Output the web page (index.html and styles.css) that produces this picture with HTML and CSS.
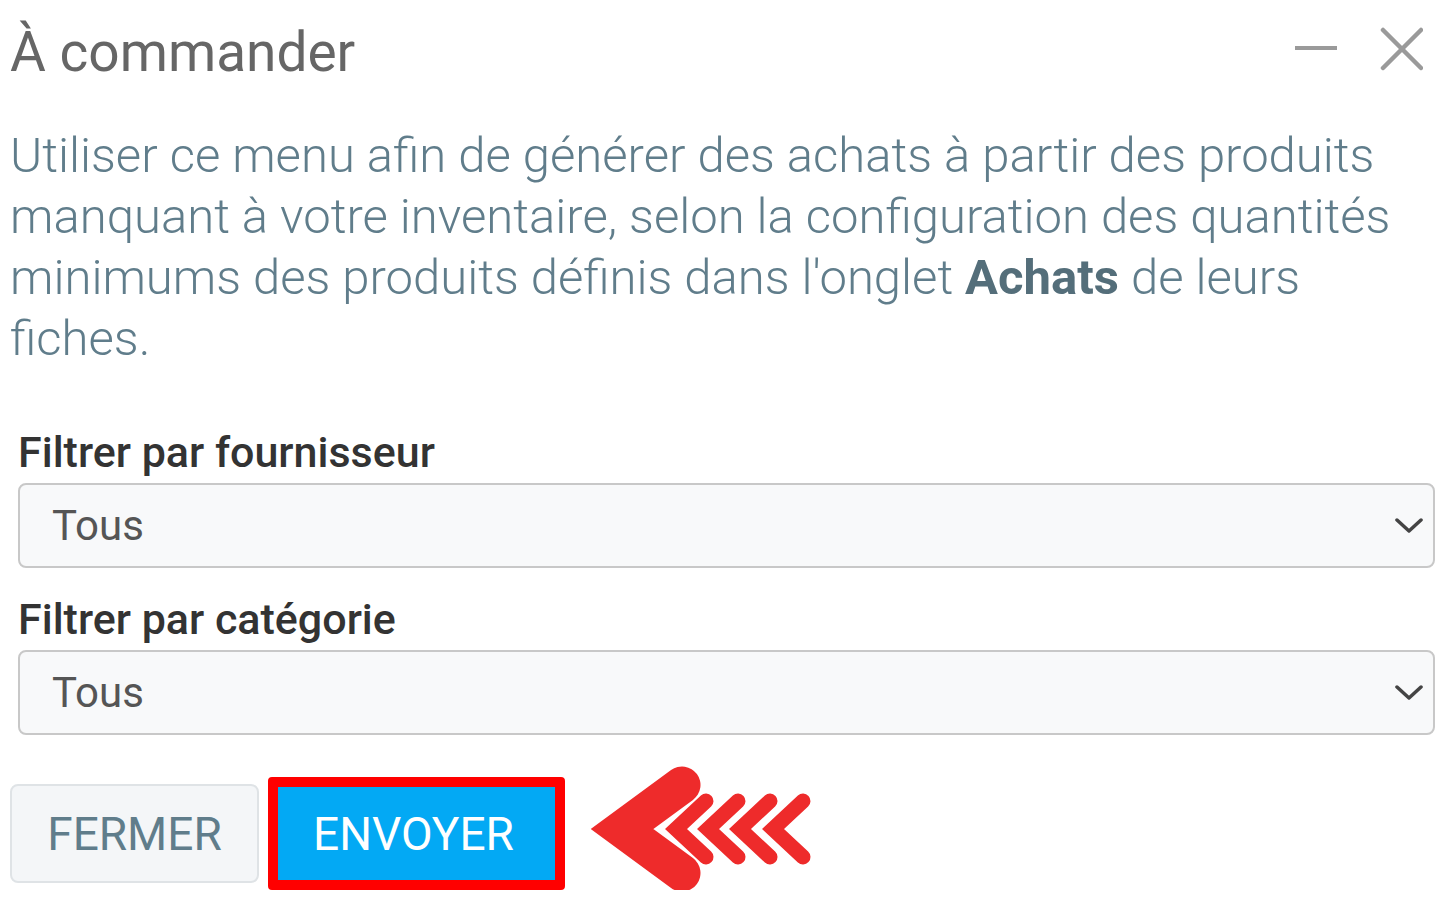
FILE: index.html
```html
<!DOCTYPE html>
<html lang="fr">
<head>
  <meta charset="UTF-8">
  <meta name="viewport" content="width=device-width, initial-scale=1.0">
  <title>À commander</title>
  <link rel="stylesheet" href="styles.css">
</head>
<body>

  <div class="dialog">
    <div class="dialog-header">
      <h1 class="dialog-title">À commander</h1>
      <div class="window-buttons">
        <!-- minimize -->
        <svg class="win-icon" width="44" height="44" viewBox="0 0 44 44">
          <line x1="1" y1="21" x2="43" y2="21" stroke="#9a9a9a" stroke-width="4"/>
        </svg>
        <!-- close -->
        <svg class="win-icon" width="44" height="44" viewBox="0 0 44 44">
          <line x1="4" y1="3" x2="42" y2="41" stroke="#9a9a9a" stroke-width="4.5" stroke-linecap="round"/>
          <line x1="42" y1="3" x2="4" y2="41" stroke="#9a9a9a" stroke-width="4.5" stroke-linecap="round"/>
        </svg>
      </div>
    </div>

    <p class="intro">Utiliser ce menu afin de générer des achats à partir des produits manquant à votre inventaire, selon la configuration des quantités minimums des produits définis dans l'onglet <b>Achats</b> de leurs fiches.</p>

    <form class="filters">
      <label class="field-label" for="supplier">Filtrer par fournisseur</label>
      <div class="select-wrap">
        <select id="supplier" class="field-select">
          <option>Tous</option>
        </select>
        <svg class="select-arrow" width="28" height="18" viewBox="0 0 28 18">
          <polyline points="2,3 14,14 26,3" fill="none" stroke="#444" stroke-width="3.5" stroke-linecap="round" stroke-linejoin="round"/>
        </svg>
      </div>

      <label class="field-label" for="category">Filtrer par catégorie</label>
      <div class="select-wrap">
        <select id="category" class="field-select">
          <option>Tous</option>
        </select>
        <svg class="select-arrow" width="28" height="18" viewBox="0 0 28 18">
          <polyline points="2,3 14,14 26,3" fill="none" stroke="#444" stroke-width="3.5" stroke-linecap="round" stroke-linejoin="round"/>
        </svg>
      </div>
    </form>

    <div class="actions">
      <button type="button" class="btn btn-close">FERMER</button>
      <span class="highlight">
        <button type="button" class="btn btn-send">ENVOYER</button>
      </span>
      <!-- pointer arrow -->
      <svg class="pointer" width="240" height="150" viewBox="580 758 240 150">
        <polyline points="681,784 621,828 681,872" fill="none" stroke="#ee2b2b" stroke-width="37" stroke-linecap="round" stroke-linejoin="miter"/>
        <g fill="none" stroke="#ee2b2b" stroke-width="15" stroke-linecap="round" stroke-linejoin="miter">
          <polyline points="705,800 675,828 705,856"/>
          <polyline points="737,800 707,828 737,856"/>
          <polyline points="769,800 739,828 769,856"/>
          <polyline points="802,800 772,828 802,856"/>
        </g>
      </svg>
    </div>
  </div>

</body>
</html>
```

FILE: styles.css
```css
body {
  margin: 0;
  background: #fff;
  font-family: Roboto, "Liberation Sans", Arial, sans-serif;
}
.dialog {
  padding: 20px 6px 0 10px;
}
.dialog-header {
  display: flex;
  justify-content: space-between;
  align-items: flex-start;
}
.dialog-title {
  margin: 0;
  font-size: 55px;
  font-weight: 400;
  line-height: 65px;
  color: #666;
}
.window-buttons {
  display: flex;
  gap: 41px;
  padding: 7px 12px 0 0;
}
.intro {
  margin: 40px 0 0 0;
  font-size: 49px;
  font-weight: 300;
  line-height: 61px;
  color: #607d8b;
}
.intro b {
  font-weight: 700;
  color: #546e7a;
}
.filters {
  display: flex;
  flex-direction: column;
  padding: 0 0 0 8px;
  margin-top: 57px;
}
.field-label {
  font-size: 43px;
  font-weight: 500;
  line-height: 53px;
  color: #333;
  margin-bottom: 4px;
}
.select-wrap {
  position: relative;
  margin-bottom: 25px;
}
.field-select {
  appearance: none;
  -webkit-appearance: none;
  width: 100%;
  height: 85px;
  box-sizing: border-box;
  padding: 0 60px 0 32px;
  border: 2px solid #c8c8c8;
  border-radius: 8px;
  background: #f8f9fa;
  font-family: inherit;
  font-size: 42px;
  color: #555;
}
.select-arrow {
  position: absolute;
  right: 12px;
  top: 34px;
  pointer-events: none;
}
.actions {
  display: flex;
  align-items: center;
  margin-top: 17px;
}
.btn {
  font-family: inherit;
  font-size: 46px;
  border-radius: 8px;
  cursor: pointer;
}
.btn-close {
  width: 249px;
  height: 99px;
  background: #f4f6f8;
  border: 2px solid #dfe3e6;
  color: #607d8b;
}
.highlight {
  display: inline-flex;
  margin-left: 9px;
  border: 10px solid #ff0000;
  border-radius: 4px;
}
.btn-send {
  width: 277px;
  height: 93px;
  padding: 0 6px 0 0;
  background: #03a9f4;
  border: none;
  border-radius: 0;
  color: #fff;
}
.pointer {
  margin: -19px 0 -19px 16px;
}
```
